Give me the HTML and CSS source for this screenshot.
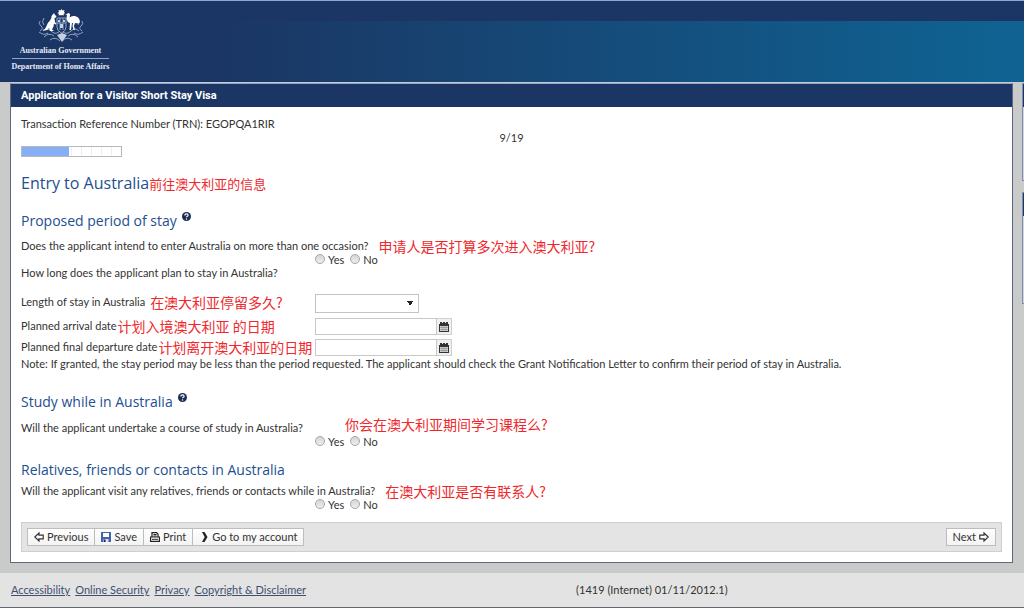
FILE: index.html
```html
<!DOCTYPE html>
<html lang="en">
<head>
    <meta charset="UTF-8">
    <meta name="viewport" content="width=device-width, initial-scale=1.0">
    <title>Application for a Visitor Short Stay Visa</title>

    <link rel="stylesheet" href="styles.css">
</head>
<body>
    <header class="site-header">
        <div class="banner">
            <div class="brand">
                <svg class="crest" viewBox="0 0 48 34" aria-hidden="true">
                    <g fill="none" stroke="#8fa3c4" stroke-width="1">
                        <path d="M3 12q-2 3 1 5t-1 5M7 9q-3 4 0 7M6 22q4-4 8 0t8 1M45 12q2 3-1 5t1 5M41 9q3 4 0 7M42 22q-4-4-8 0t-8 1"/>
                        <path d="M2 23q5 4 9 1M46 23q-5 4-9 1M7 28q5-5 10-1M41 28q-5-5-10-1M13 31q5-4 10 1M35 31q-5-4-10 1"/>
                        <path d="M20 9h9v9q0 4-4.500 6q-4.500-2-4.500-6zM20 14h9M23 9v12M26 9v12"/>
                    </g>
                    <path fill="#c5d0e2" d="M21 11h2v2h-2zM26 11h2v2h-2zM23 15h3v4h-3zM20 26l5-2 5 2-5 7z"/>
                    <path fill="#fff" d="M24.500 0l1 1.500 2-.5-.5 2 1 1-1.500 1 .5 1.500-2-.5-1 .5-1-.5-1.500.5.5-1.500L20.500 4l1.500-1-.5-2 2 .5z"/>
                    <path fill="#fff" d="M17 4l1 2 1.500 1-.5 1.500-1.500.5.5 4 1.500 2-1 .5-1.500-1-.5 3-1.500 3 2 1.500h-4l-1-3q-1 2-4 2.500l-3-.5q3 0 4-3 1-4 4-6.500 2-2 1.500-4.500z"/>
                    <path fill="#fff" d="M30 5q2-2 3 .5 0 2-.5 3 2-2 5-1.500 4 .5 5 4 1 3-1.500 3.500l-3-.5-1 3 1 4h-1.500l-1-4 .5-3h-1l-1 7h-1.500l.5-7q-3-1-3.500-4 0-2 .5-4l-2-.5z"/>
                </svg>
                <span class="brand-gov">Australian Government</span>
                <span class="brand-dept">Department of Home Affairs</span>
            </div>
        </div>
    </header>

    <main class="content">
        <form class="panel">
            <h1 class="panel-title">Application for a Visitor Short Stay Visa</h1>
            <div class="panel-body">
                <div class="trn">Transaction Reference Number (TRN): EGOPQA1RIR</div>
                <div class="page-count">9/19</div>
                <div class="progress"><div class="progress-fill" style="width: 47%"></div></div>

                <h2 class="page-heading">Entry to Australia<span class="zh">前往澳大利亚的信息</span></h2>

                <section class="section">
                    <h3 class="heading">Proposed period of stay
                        <svg class="help" viewBox="0 0 10 10" aria-hidden="true"><circle cx="5" cy="5" r="5" fill="#1c2c54"/><path d="M3.200 3.800q0-1.700 1.800-1.700t1.800 1.400q0 .8-.9 1.200-.9.400-.9 1.200" fill="none" stroke="#fff" stroke-width="1.300"/><circle cx="5" cy="7.700" r=".8" fill="#fff"/></svg>
                    </h3>
                    <div class="question">Does the applicant intend to enter Australia on more than one occasion? <span class="zh zh-wide">申请人是否打算多次进入澳大利亚?</span></div>
                    <div class="answers">
                        <label><input type="radio" name="multiple">Yes</label>
                        <label><input type="radio" name="multiple">No</label>
                    </div>
                    <div class="question duration">How long does the applicant plan to stay in Australia?</div>

                    <div class="field field-select">
                        <div class="field-label"><label for="length">Length of stay in Australia</label><span class="zh">在澳大利亚停留多久?</span></div>
                        <select id="length" class="select"><option></option></select>
                    </div>
                    <div class="field">
                        <div class="field-label tight"><label for="arrival">Planned arrival date</label><span class="zh">计划入境澳大利亚 的日期</span></div>
                        <div class="date">
                            <input id="arrival" type="text">
                            <button type="button" aria-label="Arrival calendar"><svg viewBox="0 0 10 10"><path d="M0 2h1V0h2v1h1V0h2v1h1V0h2v2h1v8H0z" fill="#333"/><path d="M1 4h8v5H1z" fill="#ddd"/><path d="M1 5.500h8M1 7.500h8M3 4v5M5 4v5M7 4v5" stroke="#777" stroke-width=".5"/></svg></button>
                        </div>
                    </div>
                    <div class="field">
                        <div class="field-label tight"><label for="departure">Planned final departure date</label><span class="zh">计划离开澳大利亚的日期</span></div>
                        <div class="date">
                            <input id="departure" type="text">
                            <button type="button" aria-label="Departure calendar"><svg viewBox="0 0 10 10"><path d="M0 2h1V0h2v1h1V0h2v1h1V0h2v2h1v8H0z" fill="#333"/><path d="M1 4h8v5H1z" fill="#ddd"/><path d="M1 5.500h8M1 7.500h8M3 4v5M5 4v5M7 4v5" stroke="#777" stroke-width=".5"/></svg></button>
                        </div>
                    </div>
                    <div class="note">Note: If granted, the stay period may be less than the period requested. The applicant should check the Grant Notification Letter to confirm their period of stay in Australia.</div>
                </section>

                <section class="section study">
                    <h3 class="heading">Study while in Australia
                        <svg class="help" viewBox="0 0 10 10" aria-hidden="true"><circle cx="5" cy="5" r="5" fill="#1c2c54"/><path d="M3.200 3.800q0-1.700 1.800-1.700t1.800 1.400q0 .8-.9 1.200-.9.400-.9 1.200" fill="none" stroke="#fff" stroke-width="1.300"/><circle cx="5" cy="7.700" r=".8" fill="#fff"/></svg>
                    </h3>
                    <div class="question">Will the applicant undertake a course of study in Australia? <span class="zh zh-raised">你会在澳大利亚期间学习课程么?</span></div>
                    <div class="answers">
                        <label><input type="radio" name="study">Yes</label>
                        <label><input type="radio" name="study">No</label>
                    </div>
                </section>

                <section class="section relatives">
                    <h3 class="heading">Relatives, friends or contacts in Australia</h3>
                    <div class="question">Will the applicant visit any relatives, friends or contacts while in Australia? <span class="zh zh-wide">在澳大利亚是否有联系人?</span></div>
                    <div class="answers">
                        <label><input type="radio" name="relatives">Yes</label>
                        <label><input type="radio" name="relatives">No</label>
                    </div>
                </section>

                <div class="toolbar">
                    <div class="toolbar-group">
                        <button type="button" class="btn"><svg viewBox="0 0 10 10"><path d="M.8 5L5 1v2.200h4.200v3.600H5V9z" fill="#fff" stroke="#333" stroke-width="1.200"/></svg>Previous</button>
                        <button type="button" class="btn"><svg viewBox="0 0 10 10"><path d="M0 0h10v10H0z" fill="#3f62ad"/><path d="M2 1h6v4H2z" fill="#fff"/><path d="M2.500 7h5v3h-5z" fill="#dde"/><path d="M3 7.500h1.500V10H3z" fill="#223"/></svg>Save</button>
                        <button type="button" class="btn"><svg viewBox="0 0 10 10"><path d="M2 5V.6h4.500L8 2v3M.6 5h8.800v4.400H.6z" fill="#fff" stroke="#222" stroke-width="1.200"/><path d="M3.500 2.500h3M3.500 4h3M2 7.300h6" stroke="#222" stroke-width="1"/></svg>Print</button>
                        <button type="button" class="btn"><svg viewBox="0 0 10 10"><path d="M3 0h2.500l3 5-3 5H3l2.700-5z" fill="#222"/></svg>Go to my account</button>
                    </div>
                    <button type="button" class="btn">Next<svg viewBox="0 0 10 10"><path d="M9.200 5L5 1v2.200H.8v3.600H5V9z" fill="#fff" stroke="#333" stroke-width="1.200"/></svg></button>
                </div>
            </div>
        </form>

        <aside class="sidebar">
            <div class="side-box"></div>
            <div class="side-box side-box-tall"></div>
        </aside>
    </main>

    <footer class="site-footer">
        <nav class="footer-links">
            <a href="#">Accessibility</a>
            <a href="#">Online Security</a>
            <a href="#">Privacy</a>
            <a href="#">Copyright &amp; Disclaimer</a>
        </nav>
        <div class="version">(1419 (Internet) 01/11/2012.1)</div>
    </footer>
</body>
</html>
```
FILE: styles.css
```css
* {
    box-sizing: border-box;
}

body {
    margin: 0;
    background-color: #c9cbcb;
    color: #333;
    font: 11px/16px Lato, "Noto Sans CJK SC", sans-serif;
}

h1, h2, h3 {
    margin: 0;
    font-weight: normal;
}

button, input, select {
    font: inherit;
    color: inherit;
}

.site-header {
    background-color: #1b3664;
    border-top: 1px solid #8fa6cf;
    padding-top: 20px;
}

.banner {
    height: 61px;
    background: linear-gradient(to right, #1b3664 22%, #0f6291 97%);
}

.brand {
    display: flex;
    flex-direction: column;
    align-items: center;
    width: 101px;
    margin-left: 10px;
    margin-top: -12px;
    float: left;
    color: #e4eaf4;
    font: bold 8px/15px "Liberation Serif", serif;
    white-space: nowrap;
}

.crest {
    width: 48px;
    height: 34px;
}

.brand-dept {
    border-top: 1px solid #8fa3c4;
}

.content {
    display: flex;
    gap: 9px;
    padding: 1px 0 10px 10px;
    overflow: hidden;
}

.panel {
    flex: 0 0 calc(100% - 11px);
    background-color: #fff;
    border: 1px solid #5d6880;
    border-top-color: #8fa6cf;
}

.panel-title {
    padding: 0 10px;
    background-color: #1b3664;
    color: #fff;
    font-family: Roboto, sans-serif;
    font-size: 11px;
    font-weight: bold;
    line-height: 23px;
}

.panel-body {
    padding: 10px 10px 10px;
}

.trn {
    line-height: 14px;
}

.page-count {
    line-height: 14px;
    text-align: center;
}

.progress {
    width: 101px;
    height: 11px;
    margin-top: 1px;
    border: 1px solid #b5b9bd;
    background: repeating-linear-gradient(to right, #fff 0 9px, #eee 9px 10px);
}

.progress-fill {
    height: 100%;
    background-color: #85aef5;
}

.page-heading {
    margin-top: 16px;
    color: #1d4f91;
    font-family: "Open Sans", sans-serif;
    font-size: 16px;
    line-height: 20px;
}

.zh {
    color: #f0282c;
    font: 14px/16px "Noto Sans CJK SC", sans-serif;
    white-space: nowrap;
}

.page-heading .zh {
    font-size: 13px;
}

.zh-wide {
    margin-left: 10px;
}

.section {
    margin-top: 18px;
}

.heading {
    display: flex;
    gap: 5px;
    margin-bottom: 7px;
    color: #1d4f91;
    font-family: "Open Sans", sans-serif;
    font-size: 14px;
    line-height: 20px;
}

.help {
    width: 9px;
    height: 9px;
    margin-top: 1px;
}

.question {
    display: flex;
    align-items: flex-end;
}

.answers {
    display: flex;
    gap: 6px;
    height: 10px;
    padding-left: 294px;
    line-height: 12px;
}

.answers label {
    display: flex;
    gap: 3px;
}

input[type='radio'] {
    -webkit-appearance: none;
    width: 10px;
    height: 10px;
    margin: 0;
    border: 1px solid #a5a5a5;
    border-radius: 50%;
    background: linear-gradient(#d5d5d5, #eee);
}

.duration {
    margin: 1px 0 13px;
}

.field {
    display: grid;
    grid-template-columns: 294px 1fr;
    margin-bottom: 4px;
}

.field-select {
    margin-bottom: 5px;
}

.field-label {
    display: flex;
    align-items: center;
    gap: 5px;
    height: 16px;
    white-space: nowrap;
}

.tight {
    gap: 1px;
}

.select {
    -webkit-appearance: none;
    width: 104px;
    height: 19px;
    border: 1px solid #c3c3c3;
    border-radius: 0;
    background: linear-gradient(to bottom right, #222 50%, transparent 50%) no-repeat right 5px center / 3px 5px, linear-gradient(to bottom left, #222 50%, transparent 50%) no-repeat right 8px center / 3px 5px, #fff;
}

.date {
    display: flex;
}

.date input {
    width: 122px;
    height: 17px;
    padding: 0 3px;
    border: 1px solid #c8c8c8;
}

.date button {
    width: 15px;
    height: 17px;
    padding: 3px 2px;
    border: 1px solid #d0d0d0;
    border-left: 0;
    background-color: #f0f0f0;
}

.date svg {
    display: block;
    width: 10px;
    height: 10px;
}

.note {
    margin-top: -4px;
}

.study {
    margin-top: 20px;
}

.study .heading {
    margin-bottom: 4px;
}

.zh-raised {
    margin: 0 0 4px 42px;
}

.relatives {
    margin-top: 14px;
}

.relatives .heading {
    margin-bottom: 3px;
}

.toolbar {
    display: flex;
    justify-content: space-between;
    margin-top: 13px;
    padding: 5px;
    background-color: #e4e4e4;
    border: 1px solid #cfcfcf;
}

.toolbar-group {
    display: flex;
}

.btn {
    display: flex;
    align-items: center;
    gap: 3px;
    height: 18px;
    padding: 0 6px;
    border: 1px solid #bdbdbd;
    background: linear-gradient(#fff, #f3f3f3);
}

.btn + .btn {
    border-left: 0;
}

.btn svg {
    width: 10px;
    height: 10px;
}

.sidebar {
    flex: 0 0 200px;
}

.side-box {
    height: 98px;
    margin-bottom: 11px;
    border: 1px solid #7f8bb5;
    background: linear-gradient(#1b3664 23px, #d3d4d8 23px);
}

.side-box-tall {
    height: 112px;
}

.site-footer {
    display: flex;
    padding: 9px 11px;
    background-color: #e3e3e3;
    border-bottom: 1px solid #626872;
}

.footer-links {
    display: flex;
    flex: 0 0 calc(56% + 4px);
    gap: 5px;
}

.footer-links a {
    color: #3f4f6e;
}
```
